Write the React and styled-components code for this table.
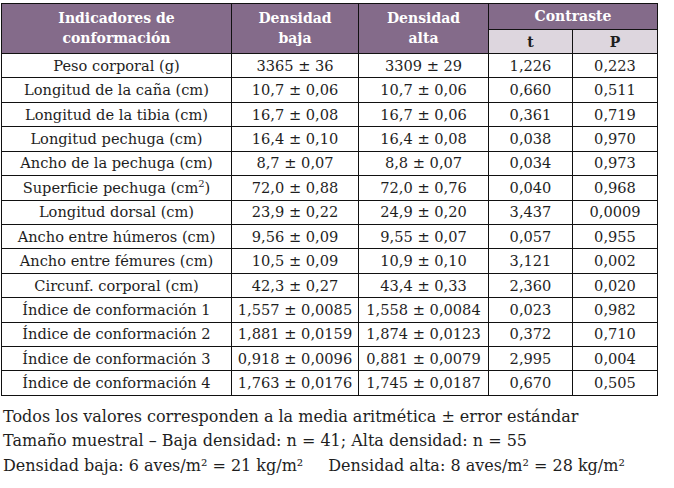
import React from "react";
import styled, { createGlobalStyle } from "styled-components";

const rows = [
  ["Peso corporal (g)", "3365 ± 36", "3309 ± 29", "1,226", "0,223"],
  ["Longitud de la caña (cm)", "10,7 ± 0,06", "10,7 ± 0,06", "0,660", "0,511"],
  ["Longitud de la tibia (cm)", "16,7 ± 0,08", "16,7 ± 0,06", "0,361", "0,719"],
  ["Longitud pechuga (cm)", "16,4 ± 0,10", "16,4 ± 0,08", "0,038", "0,970"],
  ["Ancho de la pechuga (cm)", "8,7 ± 0,07", "8,8 ± 0,07", "0,034", "0,973"],
  [<>Superficie pechuga (cm<sup>2</sup>)</>, "72,0 ± 0,88", "72,0 ± 0,76", "0,040", "0,968"],
  ["Longitud dorsal (cm)", "23,9 ± 0,22", "24,9 ± 0,20", "3,437", "0,0009"],
  ["Ancho entre húmeros (cm)", "9,56 ± 0,09", "9,55 ± 0,07", "0,057", "0,955"],
  ["Ancho entre fémures (cm)", "10,5 ± 0,09", "10,9 ± 0,10", "3,121", "0,002"],
  ["Circunf. corporal (cm)", "42,3 ± 0,27", "43,4 ± 0,33", "2,360", "0,020"],
  ["Índice de conformación 1", "1,557 ± 0,0085", "1,558 ± 0,0084", "0,023", "0,982"],
  ["Índice de conformación 2", "1,881 ± 0,0159", "1,874 ± 0,0123", "0,372", "0,710"],
  ["Índice de conformación 3", "0,918 ± 0,0096", "0,881 ± 0,0079", "2,995", "0,004"],
  ["Índice de conformación 4", "1,763 ± 0,0176", "1,745 ± 0,0187", "0,670", "0,505"],
];

function App() {
  return (
    <Page>
      <GlobalStyle />
      <Table>
        <colgroup>
          <col style={{ width: 230 }} />
          <col style={{ width: 127 }} />
          <col style={{ width: 130 }} />
          <col style={{ width: 84 }} />
          <col style={{ width: 85 }} />
        </colgroup>
        <thead>
          <tr>
            <HeadCell rowSpan={2}>
              Indicadores de
              <br />
              conformación
            </HeadCell>
            <HeadCell rowSpan={2}>
              Densidad
              <br />
              baja
            </HeadCell>
            <HeadCell rowSpan={2}>
              Densidad
              <br />
              alta
            </HeadCell>
            <HeadCell colSpan={2} $short>
              Contraste
            </HeadCell>
          </tr>
          <tr>
            <SubCell>t</SubCell>
            <SubCell>P</SubCell>
          </tr>
        </thead>
        <tbody>
          {rows.map((r, i) => (
            <tr key={i}>
              {r.map((v, j) => (
                <Cell key={j}>{v}</Cell>
              ))}
            </tr>
          ))}
        </tbody>
      </Table>
      <Notes>
        <Note>Todos los valores corresponden a la media aritmética ± error estándar</Note>
        <Note>Tamaño muestral – Baja densidad: n = 41; Alta densidad: n = 55</Note>
        <Note>
          Densidad baja: 6 aves/m² = 21 kg/m²<Gap />Densidad alta: 8 aves/m² = 28 kg/m²
        </Note>
      </Notes>
    </Page>
  );
}

export default App;

const GlobalStyle = createGlobalStyle`
  body {
    margin: 0;
    background: #ffffff;
    font-family: "DejaVu Serif", "Liberation Serif", serif;
    color: #1e1e1e;
  }
`;

const Page = styled.div`
  width: 674px;
  height: 488px;
  padding: 3px 0 0 1px;
  box-sizing: border-box;
  overflow: hidden;
`;

const Table = styled.table`
  width: 657px;
  table-layout: fixed;
  border-collapse: collapse;
  font-size: 14.6px;
  sup {
    font-size: 10px;
    line-height: 0;
  }
`;

const HeadCell = styled.th`
  background: #846b8a;
  color: #ffffff;
  font-weight: bold;
  font-size: 14px;
  line-height: 20px;
  height: ${(p) => (p.$short ? "23px" : "47px")};
  padding: 0 4px 2px;
  border: 1px solid #111111;
  text-align: center;
  vertical-align: middle;
`;

const SubCell = styled.th`
  background: #ddd6de;
  color: #1e1e1e;
  font-weight: bold;
  font-size: 14px;
  height: 23px;
  padding: 0;
  border: 1px solid #111111;
  text-align: center;
`;

const Cell = styled.td`
  height: 23.43px;
  padding: 0 2px;
  border: 1px solid #111111;
  text-align: center;
  vertical-align: middle;
  white-space: nowrap;
  line-height: 18px;
`;

const Notes = styled.div`
  margin-top: 9px;
  padding-left: 2px;
  font-size: 16px;
  line-height: 24.5px;
`;

const Note = styled.div`
  white-space: nowrap;
`;

const Gap = styled.span`
  display: inline-block;
  width: 25px;
`;
